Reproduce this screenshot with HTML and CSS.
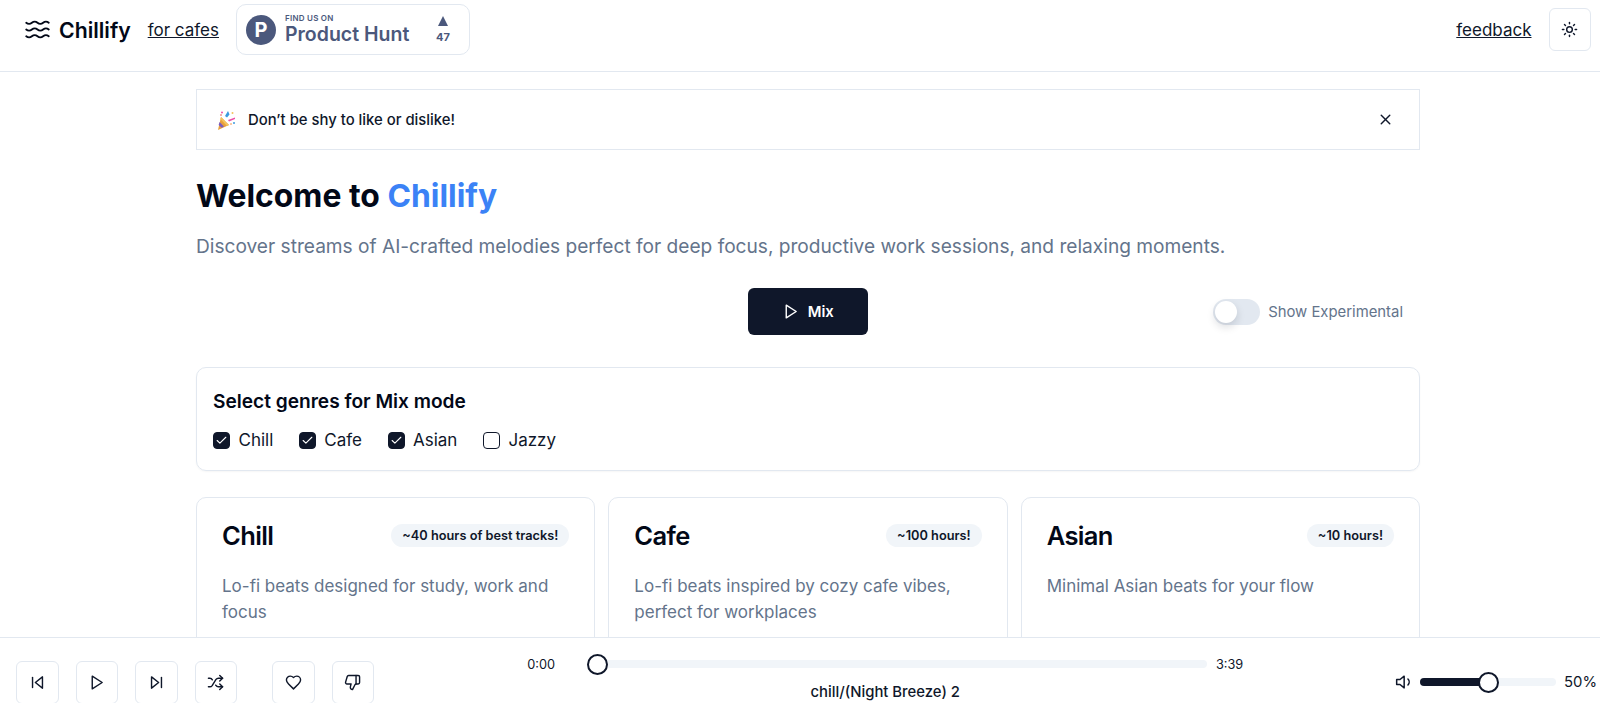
FILE: index.html
```html
<!DOCTYPE html>
<html lang="en">
<head>
    <meta charset="UTF-8">
    <meta name="viewport" content="width=device-width, initial-scale=1.0">
    <title>Chillify</title>
    <link rel="stylesheet" href="styles.css">
</head>
<body>

    <header class="topbar">
        <div class="topbar-left">
            <a class="logo" href="#">
                <svg class="icon icon-logo" viewBox="0 0 24 24"><path d="M2 6c.6.5 1.2 1 2.5 1C7 7 7 5 9.5 5c2.6 0 2.4 2 5 2 2.5 0 2.5-2 5-2 1.3 0 1.9.5 2.5 1"/><path d="M2 12c.6.5 1.2 1 2.5 1 2.5 0 2.5-2 5-2 2.6 0 2.4 2 5 2 2.5 0 2.5-2 5-2 1.3 0 1.9.5 2.5 1"/><path d="M2 18c.6.5 1.2 1 2.5 1 2.5 0 2.5-2 5-2 2.6 0 2.4 2 5 2 2.5 0 2.5-2 5-2 1.3 0 1.9.5 2.5 1"/></svg>
                <span>Chillify</span>
            </a>
            <a class="link" href="#">for cafes</a>
            <a class="ph-badge" href="#">
                <span class="ph-circle">P</span>
                <span class="ph-text">
                    <span class="ph-small">FIND US ON</span>
                    <span class="ph-name">Product Hunt</span>
                </span>
                <span class="ph-votes">
                    <span class="ph-arrow"></span>
                    <span class="ph-count">47</span>
                </span>
            </a>
        </div>
        <div class="topbar-right">
            <a class="link" href="#">feedback</a>
            <button class="icon-btn">
                <svg class="icon" viewBox="0 0 24 24"><circle cx="12" cy="12" r="4"/><path d="M12 2v2"/><path d="M12 20v2"/><path d="m4.93 4.93 1.41 1.41"/><path d="m17.66 17.66 1.41 1.41"/><path d="M2 12h2"/><path d="M20 12h2"/><path d="m6.34 17.66-1.41 1.41"/><path d="m19.07 4.93-1.41 1.41"/></svg>
            </button>
        </div>
    </header>

    <main class="content">
        <div class="banner">
            <div class="banner-msg">
                <svg class="popper" viewBox="0 0 20 20">
                    <path d="M5 7 L13 15 L2 20 Z" fill="#e8a03c"/>
                    <path d="M3.6 12 L8 16.6 L5.6 17.8 L2.6 15 Z" fill="#7a5bc0"/>
                    <path d="M5 7 L13 15 L11 16 L4.4 9 Z" fill="#f4c45c"/>
                    <path d="M9 6 L12 1 L13.5 4.5 L11 7.5 Z" fill="#3b9be0"/>
                    <path d="M12 10 L19 7.5 L19 9 L13 11.5 Z" fill="#ec4fa8"/>
                    <circle cx="6" cy="2.5" r="1" fill="#ec4fa8"/>
                    <circle cx="5" cy="5" r=".8" fill="#e8493c"/>
                    <circle cx="16.5" cy="3" r="1" fill="#f4c45c"/>
                    <circle cx="18" cy="13" r="1" fill="#3b9be0"/>
                    <circle cx="15" cy="14" r=".8" fill="#f0883c"/>
                </svg>
                <span>Don’t be shy to like or dislike!</span>
            </div>
            <svg class="icon icon-close" viewBox="0 0 24 24"><path d="M18 6 6 18"/><path d="m6 6 12 12"/></svg>
        </div>

        <h1>Welcome to <span class="accent">Chillify</span></h1>
        <p class="lead">Discover streams of AI-crafted melodies perfect for deep focus, productive work sessions, and relaxing moments.</p>

        <div class="mix-row">
            <div></div>
            <button class="mix-btn">
                <svg class="icon" viewBox="0 0 24 24"><polygon points="6 3 20 12 6 21 6 3"/></svg>
                Mix
            </button>
            <div class="experimental">
                <span class="toggle"><span class="toggle-thumb"></span></span>
                <span>Show Experimental</span>
            </div>
        </div>

        <section class="genres">
            <h2>Select genres for Mix mode</h2>
            <div class="genre-options">
                <label class="genre"><span class="check on"><svg viewBox="0 0 24 24"><path d="M20 6 9 17l-5-5"/></svg></span>Chill</label>
                <label class="genre"><span class="check on"><svg viewBox="0 0 24 24"><path d="M20 6 9 17l-5-5"/></svg></span>Cafe</label>
                <label class="genre"><span class="check on"><svg viewBox="0 0 24 24"><path d="M20 6 9 17l-5-5"/></svg></span>Asian</label>
                <label class="genre"><span class="check"></span>Jazzy</label>
            </div>
        </section>

        <section class="cards">
            <article class="card">
                <div class="card-head">
                    <h3>Chill</h3>
                    <span class="pill">~40 hours of best tracks!</span>
                </div>
                <p>Lo-fi beats designed for study, work and focus</p>
            </article>
            <article class="card">
                <div class="card-head">
                    <h3>Cafe</h3>
                    <span class="pill">~100 hours!</span>
                </div>
                <p>Lo-fi beats inspired by cozy cafe vibes, perfect for workplaces</p>
            </article>
            <article class="card">
                <div class="card-head">
                    <h3>Asian</h3>
                    <span class="pill">~10 hours!</span>
                </div>
                <p>Minimal Asian beats for your flow</p>
            </article>
        </section>
    </main>

    <footer class="player">
        <div class="controls">
            <div class="control-group">
                <button class="icon-btn"><svg class="icon" viewBox="0 0 24 24"><polygon points="19 20 9 12 19 4 19 20"/><line x1="5" y1="19" x2="5" y2="5"/></svg></button>
                <button class="icon-btn"><svg class="icon" viewBox="0 0 24 24"><polygon points="6 3 20 12 6 21 6 3"/></svg></button>
                <button class="icon-btn"><svg class="icon" viewBox="0 0 24 24"><polygon points="5 4 15 12 5 20 5 4"/><line x1="19" y1="5" x2="19" y2="19"/></svg></button>
                <button class="icon-btn"><svg class="icon" viewBox="0 0 24 24"><path d="m18 14 4 4-4 4"/><path d="m18 2 4 4-4 4"/><path d="M2 18h1.973a4 4 0 0 0 3.3-1.7l5.454-8.6a4 4 0 0 1 3.3-1.7H22"/><path d="M2 6h1.972a4 4 0 0 1 3.6 2.2"/><path d="M22 18h-6.041a4 4 0 0 1-3.3-1.8l-.359-.45"/></svg></button>
            </div>
            <div class="control-group">
                <button class="icon-btn"><svg class="icon" viewBox="0 0 24 24"><path d="M19 14c1.49-1.46 3-3.21 3-5.5A5.5 5.5 0 0 0 16.5 3c-1.76 0-3 .5-4.5 2-1.5-1.5-2.74-2-4.5-2A5.5 5.5 0 0 0 2 8.5c0 2.3 1.5 4.05 3 5.5l7 7Z"/></svg></button>
                <button class="icon-btn"><svg class="icon" viewBox="0 0 24 24"><path d="M17 14V2"/><path d="M9 18.12 10 14H4.17a2 2 0 0 1-1.92-2.56l2.33-8A2 2 0 0 1 6.5 2H20a2 2 0 0 1 2 2v8a2 2 0 0 1-2 2h-2.76a2 2 0 0 0-1.79 1.11L12 22a3.13 3.13 0 0 1-3-3.88Z"/></svg></button>
            </div>
        </div>

        <div class="now-playing">
            <div class="progress">
                <span class="time">0:00</span>
                <div class="slider slider-progress"><span class="thumb"></span></div>
                <span class="time">3:39</span>
            </div>
            <div class="track-name">chill/(Night Breeze) 2</div>
        </div>

        <div class="volume">
            <svg class="icon" viewBox="0 0 24 24"><polygon points="11 5 6 9 2 9 2 15 6 15 11 19 11 5"/><path d="M15.54 8.46a5 5 0 0 1 0 7.07"/></svg>
            <div class="slider slider-volume">
                <span class="slider-fill" style="width: 50%"></span>
                <span class="thumb" style="left: 50%"></span>
            </div>
            <span class="volume-label">50%</span>
        </div>
    </footer>

</body>
</html>
```

FILE: styles.css
```css
* {
    box-sizing: border-box;
}

html {
    font-size: 17px;
}

html, body {
    height: 100%;
}

body {
    margin: 0;
    overflow: hidden;
    background: #fff;
    color: #0f172a;
    font-family: Inter, "Liberation Sans", sans-serif;
}

a {
    color: inherit;
}

.icon {
    width: 17px;
    height: 17px;
    fill: none;
    stroke: currentColor;
    stroke-width: 2;
    stroke-linecap: round;
    stroke-linejoin: round;
    flex: none;
}

/* top bar */
.topbar {
    height: 72px;
    padding: 0 9px 12px 24px;
    display: flex;
    align-items: center;
    justify-content: space-between;
    border-bottom: 1px solid #e2e8f0;
}

.topbar-left,
.topbar-right {
    display: flex;
    align-items: center;
}

.logo {
    display: flex;
    align-items: center;
    gap: 8px;
    font-size: 1.25rem;
    font-weight: 600;
    color: #020817;
    text-decoration: none;
}

.icon-logo {
    width: 27px;
    height: 27px;
    stroke-width: 1.7;
}

.link {
    font-size: 1rem;
}

.topbar-left .link {
    margin-left: 17px;
}

.topbar-right .link {
    margin-right: 17px;
}

.icon-btn {
    width: 2.5rem;
    height: 2.5rem;
    padding: 0;
    display: flex;
    align-items: center;
    justify-content: center;
    background: #fff;
    color: #0f172a;
    border: 1px solid #e2e8f0;
    border-radius: 6px;
}

/* product hunt badge */
.ph-badge {
    width: 234px;
    height: 51px;
    margin-left: 17px;
    padding: 0 0 0 9px;
    display: flex;
    align-items: center;
    color: #4b587c;
    text-decoration: none;
    border: 1px solid #e2e8f0;
    border-radius: 10px;
}

.ph-circle {
    width: 30px;
    height: 30px;
    margin-right: 9px;
    display: flex;
    align-items: center;
    justify-content: center;
    background: #4b587c;
    color: #fff;
    border-radius: 50%;
    font-size: 20px;
    font-weight: 700;
}

.ph-text {
    width: 145px;
    display: flex;
    flex-direction: column;
}

.ph-small {
    font-size: 8px;
    font-weight: 600;
    line-height: 9px;
    letter-spacing: 0.25px;
}

.ph-name {
    font-size: 19.5px;
    font-weight: 600;
    line-height: 23px;
}

.ph-votes {
    width: 26px;
    display: flex;
    flex-direction: column;
    align-items: center;
    gap: 5px;
}

.ph-arrow {
    width: 0;
    height: 0;
    border-left: 5.5px solid transparent;
    border-right: 5.5px solid transparent;
    border-bottom: 10px solid #4b587c;
}

.ph-count {
    font-size: 11px;
    font-weight: 700;
    line-height: 12px;
}

/* main column */
.content {
    width: 1224px;
    margin-left: 196px;
    padding-top: 17px;
}

.banner {
    height: 61px;
    padding: 0 25px 0 19px;
    display: flex;
    align-items: center;
    justify-content: space-between;
    border: 1px solid #e2e8f0;
    font-size: 0.875rem;
    font-weight: 500;
}

.banner-msg {
    display: flex;
    align-items: center;
    gap: 12px;
}

.popper {
    width: 20px;
    height: 20px;
}

h1 {
    margin: 26px 0 0;
    font-size: 1.875rem;
    line-height: 40px;
    font-weight: 700;
    color: #020817;
}

.accent {
    color: #3b82f6;
}

.lead {
    margin: 16px 0 0;
    font-size: 1.125rem;
    line-height: 28px;
    color: #64748b;
}

.mix-row {
    margin-top: 28px;
    display: grid;
    grid-template-columns: 1fr 120px 1fr;
    align-items: center;
}

.mix-btn {
    height: 47px;
    display: flex;
    align-items: center;
    justify-content: center;
    gap: 8.5px;
    background: #0f172a;
    color: #fff;
    border: none;
    border-radius: 6px;
    font-family: inherit;
    font-size: 0.875rem;
    font-weight: 600;
}

.experimental {
    padding-right: 17px;
    display: flex;
    align-items: center;
    justify-content: flex-end;
    gap: 8.5px;
    font-size: 0.875rem;
    color: #64748b;
}

.toggle {
    width: 47px;
    height: 26px;
    padding: 2px;
    background: #e2e8f0;
    border-radius: 13px;
}

.toggle-thumb {
    display: block;
    width: 22px;
    height: 22px;
    background: #fff;
    border-radius: 50%;
    box-shadow: 0 4px 8px rgba(15, 23, 42, 0.15);
}

/* genre picker */
.genres {
    height: 104px;
    margin-top: 32px;
    padding: 21px 16px 0;
    border: 1px solid #e2e8f0;
    border-radius: 10px;
    box-shadow: 0 1px 2px rgba(0, 0, 0, 0.04);
}

.genres h2 {
    margin: 0;
    font-size: 1.125rem;
    line-height: 24px;
    font-weight: 600;
    color: #020817;
}

.genre-options {
    margin-top: 17px;
    display: flex;
    gap: 25.5px;
}

.genre {
    display: flex;
    align-items: center;
    gap: 8.5px;
    font-size: 1rem;
    line-height: 20px;
}

.check {
    width: 1rem;
    height: 1rem;
    display: flex;
    align-items: center;
    justify-content: center;
    border: 1px solid #0f172a;
    border-radius: 4px;
}

.check.on {
    background: #0f172a;
}

.check svg {
    width: 13px;
    height: 13px;
    fill: none;
    stroke: #fff;
    stroke-width: 2;
    stroke-linecap: round;
    stroke-linejoin: round;
}

/* genre cards */
.cards {
    margin-top: 26px;
    display: grid;
    grid-template-columns: repeat(3, 1fr);
    gap: 13px;
}

.card {
    height: 240px;
    padding: 25px;
    border: 1px solid #e2e8f0;
    border-radius: 10px;
}

.card-head {
    height: 25px;
    display: flex;
    align-items: center;
    justify-content: space-between;
}

.card h3 {
    margin: 0;
    font-size: 1.5rem;
    letter-spacing: -0.025em;
    line-height: 25px;
    font-weight: 600;
    color: #020817;
}

.pill {
    padding: 3px 11px;
    background: #f1f5f9;
    border-radius: 12px;
    font-size: 0.75rem;
    line-height: 17px;
    font-weight: 600;
}

.card p {
    margin: 26px 0 0;
    font-size: 1rem;
    line-height: 25.5px;
    color: #64748b;
}

/* player bar */
.player {
    position: fixed;
    left: 0;
    right: 0;
    bottom: 0;
    height: 66px;
    padding: 23px 3px 0 16px;
    display: flex;
    justify-content: space-between;
    align-items: flex-start;
    background: #fff;
    border-top: 1px solid #e2e8f0;
    overflow: hidden;
}

.controls {
    display: flex;
    gap: 35px;
}

.control-group {
    display: flex;
    gap: 17px;
}

.now-playing {
    width: 716px;
    margin: -7px 0 0 2px;
    text-align: center;
}

.progress {
    height: 20px;
    display: flex;
    align-items: center;
    gap: 8.5px;
}

.time {
    font-size: 0.75rem;
}

.slider {
    position: relative;
    height: 8px;
    background: #f1f5f9;
    border-radius: 4px;
}

.slider-progress {
    flex: 1;
    margin-left: 34px;
}

.slider-fill {
    position: absolute;
    left: 0;
    top: 0;
    bottom: 0;
    background: #0f172a;
    border-radius: 4px;
}

.thumb {
    position: absolute;
    top: -6px;
    left: 0;
    width: 21px;
    height: 21px;
    margin-left: -10.5px;
    background: #fff;
    border: 2px solid #0f172a;
    border-radius: 50%;
}

.track-name {
    margin-top: 8px;
    font-size: 0.875rem;
    line-height: 20px;
    font-weight: 500;
}

.volume {
    height: 42px;
    display: flex;
    align-items: center;
    color: #0f172a;
}

.volume .icon {
    width: 20px;
    height: 20px;
    stroke-width: 1.8;
}

.slider-volume {
    width: 136px;
    margin-left: 5.5px;
}

.volume-label {
    margin-left: 8px;
    font-size: 0.875rem;
}
```
